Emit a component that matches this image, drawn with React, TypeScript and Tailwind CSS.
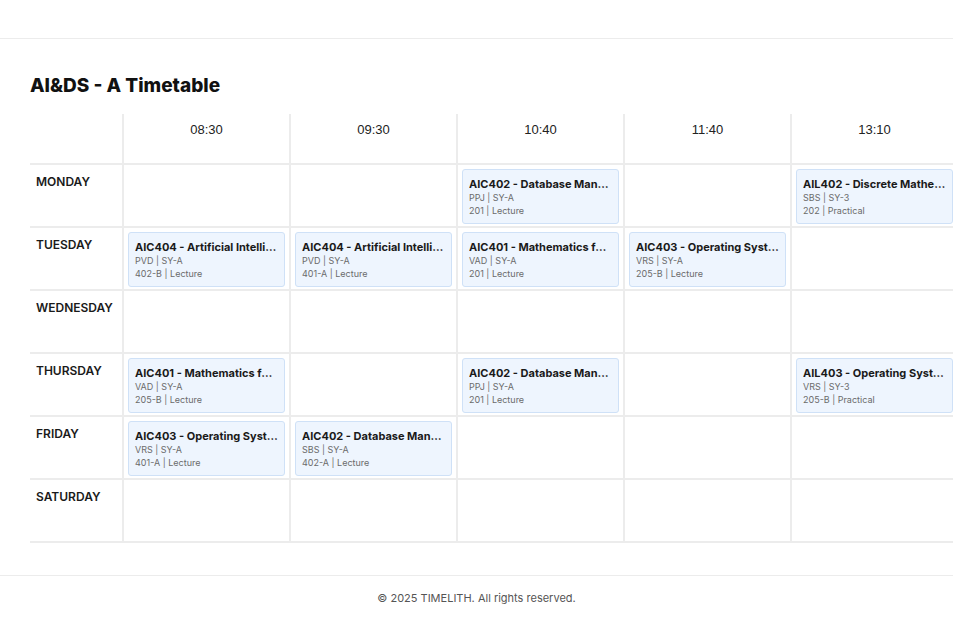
import React from 'react'

type Slot = { code: string; fac: string; room: string }

const times = ['08:30', '09:30', '10:40', '11:40', '13:10']

const rows: { day: string; slots: (Slot | null)[] }[] = [
  { day: 'MONDAY', slots: [null, null, { code: 'AIC402 - Database Management Systems', fac: 'PPJ | SY-A', room: '201 | Lecture' }, null, { code: 'AIL402 - Discrete Mathematics', fac: 'SBS | SY-3', room: '202 | Practical' }] },
  { day: 'TUESDAY', slots: [
    { code: 'AIC404 - Artificial Intelligence', fac: 'PVD | SY-A', room: '402-B | Lecture' },
    { code: 'AIC404 - Artificial Intelligence', fac: 'PVD | SY-A', room: '401-A | Lecture' },
    { code: 'AIC401 - Mathematics for Data Science', fac: 'VAD | SY-A', room: '201 | Lecture' },
    { code: 'AIC403 - Operating Systems', fac: 'VRS | SY-A', room: '205-B | Lecture' },
    null] },
  { day: 'WEDNESDAY', slots: [null, null, null, null, null] },
  { day: 'THURSDAY', slots: [
    { code: 'AIC401 - Mathematics for Data Science', fac: 'VAD | SY-A', room: '205-B | Lecture' },
    null,
    { code: 'AIC402 - Database Management Systems', fac: 'PPJ | SY-A', room: '201 | Lecture' },
    null,
    { code: 'AIL403 - Operating Systems Lab', fac: 'VRS | SY-3', room: '205-B | Practical' }] },
  { day: 'FRIDAY', slots: [
    { code: 'AIC403 - Operating Systems', fac: 'VRS | SY-A', room: '401-A | Lecture' },
    { code: 'AIC402 - Database Management Systems', fac: 'SBS | SY-A', room: '402-A | Lecture' },
    null, null, null] },
  { day: 'SATURDAY', slots: [null, null, null, null, null] },
]

const sans = { fontFamily: 'Inter, "Noto Sans", sans-serif' }

function Card({ s }: { s: Slot }) {
  return (
    <div className="h-[55px] bg-[#eef5fe] border border-[#cfe1f7] rounded-[3px] px-[6px] pt-[7px] overflow-hidden">
      <div className="text-[11px] font-bold text-[#1a1a1a] truncate leading-[14px]">{s.code}</div>
      <div className="text-[9px] text-[#6b6b6b] leading-[12px] mt-[1px]">{s.fac}</div>
      <div className="text-[9px] text-[#6b6b6b] leading-[13px]">{s.room}</div>
    </div>
  )
}

export default function App() {
  return (
    <div className="w-[953px] h-[620px] bg-white overflow-hidden flex flex-col" style={sans}>
      <div className="h-[39px] border-b border-[#ececec] shrink-0" />
      <div className="pl-[30px] pt-[34px] flex-1 overflow-hidden">
        <h1 className="text-[19px] font-extrabold text-[#111] leading-[26px]">AI&amp;DS - A Timetable</h1>
        <div className="mt-[15px] grid grid-cols-[92px_repeat(5,167px)] w-max">
          <div className="h-[51px] border-b-2 border-[#ececec]" />
          {times.map((t) => (
            <div key={t} className="h-[51px] border-l-2 border-b-2 border-[#ececec] flex justify-center pt-[6px] text-[13px] text-[#222]" style={{ fontFamily: '"Liberation Sans", Arial, sans-serif' }}>
              {t}
            </div>
          ))}
          {rows.map((r) => (
            <React.Fragment key={r.day}>
              <div className="h-[63px] border-b-2 border-[#ececec] pl-[6px] pt-[8px] text-[12px] font-semibold text-[#1a1a1a]">{r.day}</div>
              {r.slots.map((s, i) => (
                <div key={i} className="h-[63px] border-l-2 border-b-2 border-[#ececec] p-[4px]">
                  {s && <Card s={s} />}
                </div>
              ))}
            </React.Fragment>
          ))}
        </div>
      </div>
      <div className="h-[45px] border-t border-[#ececec] shrink-0 flex items-center justify-center text-[11px] text-[#555]">
        © 2025 TIMELITH. All rights reserved.
      </div>
    </div>
  )
}
